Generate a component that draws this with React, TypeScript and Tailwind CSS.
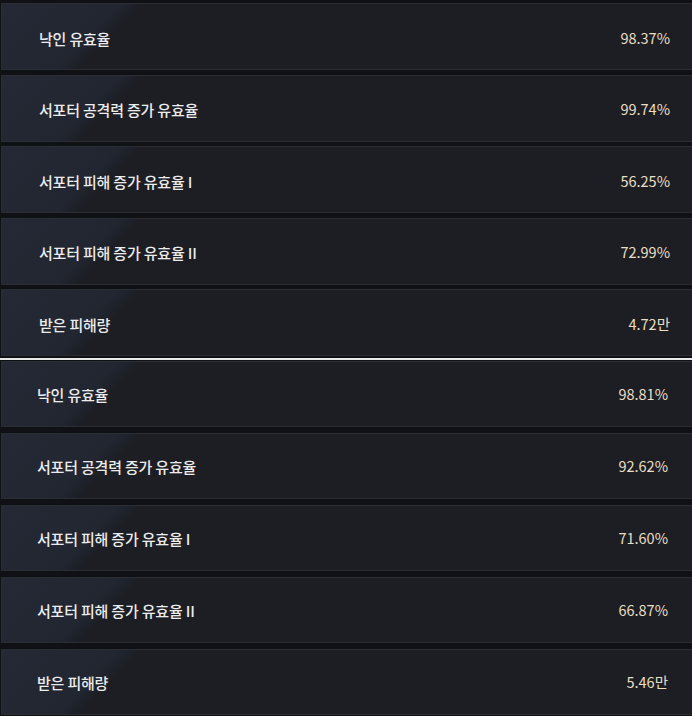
const top = [
  { label: '낙인 유효율', value: '98.37%' },
  { label: '서포터 공격력 증가 유효율', value: '99.74%' },
  { label: '서포터 피해 증가 유효율 I', value: '56.25%' },
  { label: '서포터 피해 증가 유효율 II', value: '72.99%' },
  { label: '받은 피해량', value: '4.72만' },
];

const bottom = [
  { label: '낙인 유효율', value: '98.81%' },
  { label: '서포터 공격력 증가 유효율', value: '92.62%' },
  { label: '서포터 피해 증가 유효율 I', value: '71.60%' },
  { label: '서포터 피해 증가 유효율 II', value: '66.87%' },
  { label: '받은 피해량', value: '5.46만' },
];

export default function App() {
  return (
    <main className="h-[716px] w-[692px] overflow-hidden bg-[#101114] font-['Noto_Sans_CJK_KR','Noto_Sans',sans-serif]">
      {/* ─── first player ─── */}
      <div className="flex flex-col gap-[4.5px] pt-[3px]">
        {top.map((r) => (
          <StatRow key={r.label} {...r} height="h-[67px]" pad="pl-[37px] pr-[22px] pt-[3px]" />
        ))}
      </div>

      <div className="mt-[2px] h-[2px] bg-[#e8e8e8]" />

      {/* ─── second player ─── */}
      <div className="flex flex-col gap-[6px] pt-[1px]">
        {bottom.map((r) => (
          <StatRow key={r.label} {...r} height="h-[66px]" pad="pl-[35px] pr-[24px]" />
        ))}
      </div>
    </main>
  );
}

function StatRow({
  label,
  value,
  height,
  pad,
}: {
  label: string;
  value: string;
  height: string;
  pad: string;
}) {
  return (
    <div
      className={`ml-[1px] flex w-[700px] shrink-0 items-center justify-between border border-[#2a2d34] bg-[linear-gradient(134deg,#242935_0px,#212631_84px,#1c1e24_100px,#1c1e24_100%)] ${height} ${pad}`}
    >
      <span className="text-[15px] font-medium leading-none tracking-[-0.2px] text-[#ececec]">{label}</span>
      <span className="mr-[8px] text-[14.5px] leading-none text-[#eadfc3]">{value}</span>
    </div>
  );
}
